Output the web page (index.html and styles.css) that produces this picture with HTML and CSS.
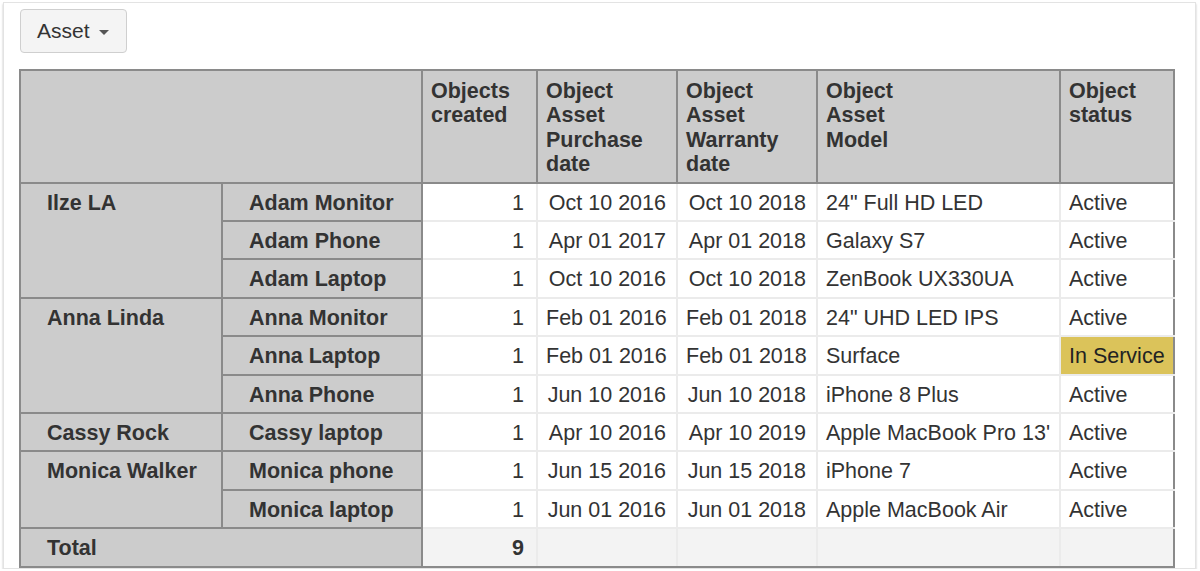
FILE: index.html
```html
<!DOCTYPE html>
<html>
<head>
<meta charset="utf-8">
<title>Asset report</title>
<link rel="stylesheet" href="styles.css">
</head>
<body>
<div class="panel">
  <button class="dropdown">Asset <span class="caret"></span></button>
  <table class="pivot">
    <colgroup>
      <col class="c-owner"><col class="c-item"><col class="c-count"><col class="c-date"><col class="c-date"><col class="c-model"><col class="c-status">
    </colgroup>
    <thead>
      <tr>
        <th colspan="2"></th>
        <th>Objects created</th>
        <th>Object Asset Purchase date</th>
        <th>Object Asset Warranty date</th>
        <th><span class="wrap">Object Asset Model</span></th>
        <th class="last">Object status</th>
      </tr>
    </thead>
    <tbody>
      <tr>
        <th class="rh" rowspan="3">Ilze LA</th>
        <th class="rh">Adam Monitor</th>
        <td class="num">1</td><td class="num">Oct 10 2016</td><td class="num">Oct 10 2018</td><td>24" Full HD LED</td><td class="last">Active</td>
      </tr>
      <tr>
        <th class="rh">Adam Phone</th>
        <td class="num">1</td><td class="num">Apr 01 2017</td><td class="num">Apr 01 2018</td><td>Galaxy S7</td><td class="last">Active</td>
      </tr>
      <tr>
        <th class="rh">Adam Laptop</th>
        <td class="num">1</td><td class="num">Oct 10 2016</td><td class="num">Oct 10 2018</td><td>ZenBook UX330UA</td><td class="last">Active</td>
      </tr>
      <tr>
        <th class="rh" rowspan="3">Anna Linda</th>
        <th class="rh">Anna Monitor</th>
        <td class="num">1</td><td class="num">Feb 01 2016</td><td class="num">Feb 01 2018</td><td>24" UHD LED IPS</td><td class="last">Active</td>
      </tr>
      <tr>
        <th class="rh">Anna Laptop</th>
        <td class="num">1</td><td class="num">Feb 01 2016</td><td class="num">Feb 01 2018</td><td>Surface</td><td class="last service">In Service</td>
      </tr>
      <tr>
        <th class="rh">Anna Phone</th>
        <td class="num">1</td><td class="num">Jun 10 2016</td><td class="num">Jun 10 2018</td><td>iPhone 8 Plus</td><td class="last">Active</td>
      </tr>
      <tr>
        <th class="rh">Cassy Rock</th>
        <th class="rh">Cassy laptop</th>
        <td class="num">1</td><td class="num">Apr 10 2016</td><td class="num">Apr 10 2019</td><td>Apple MacBook Pro 13'</td><td class="last">Active</td>
      </tr>
      <tr>
        <th class="rh" rowspan="2">Monica Walker</th>
        <th class="rh">Monica phone</th>
        <td class="num">1</td><td class="num">Jun 15 2016</td><td class="num">Jun 15 2018</td><td>iPhone 7</td><td class="last">Active</td>
      </tr>
      <tr>
        <th class="rh">Monica laptop</th>
        <td class="num">1</td><td class="num">Jun 01 2016</td><td class="num">Jun 01 2018</td><td>Apple MacBook Air</td><td class="last">Active</td>
      </tr>
      <tr class="total">
        <th class="rh" colspan="2">Total</th>
        <td class="num strong">9</td><td></td><td></td><td></td><td class="last"></td>
      </tr>
    </tbody>
  </table>
</div>
</body>
</html>
```

FILE: styles.css
```css
html, body {
  margin: 0;
  padding: 0;
  background: #ffffff;
}

body {
  font-family: "Liberation Sans", Arial, Helvetica, sans-serif;
  color: #333333;
  overflow: hidden;
}

.panel {
  margin: 2px 4px 0 3px;
  border: 1px solid #e3e3e3;
  padding: 6px 21px 0 16px;
  box-shadow: 0 2px 2px rgba(0, 0, 0, 0.25);
  background: #ffffff;
}

.dropdown {
  display: flex;
  align-items: center;
  gap: 9px;
  height: 44px;
  width: 107px;
  padding: 0 0 0 16px;
  border: 1px solid #cfcfcf;
  border-radius: 4px;
  background: #f4f4f4;
  font-family: inherit;
  font-size: 21px;
  color: #333333;
  margin: 0 0 16px 0;
}

.caret {
  width: 0;
  height: 0;
  border-left: 5px solid transparent;
  border-right: 5px solid transparent;
  border-top: 5px solid #555555;
  margin-top: 2px;
}

.pivot {
  width: 100%;
  margin-left: -1px;
  table-layout: fixed;
  border-collapse: collapse;
  border: 2px solid #8a8a8a;
  font-size: 21.5px;
  line-height: 24.4px;
}

.c-owner { width: 202px; }
.c-item { width: 200px; }
.c-count { width: 115px; }
.c-date { width: 140px; }
.c-model { width: 243px; }
.c-status { width: 114px; }

.pivot thead th {
  background: #cccccc;
  border: 2px solid #8a8a8a;
  text-align: left;
  vertical-align: top;
  font-weight: bold;
  padding: 8px 8px 5px 8px;
}

.wrap {
  display: block;
  max-width: 100px;
}

.pivot th.rh {
  background: #cccccc;
  border: 2px solid #8a8a8a;
  text-align: left;
  vertical-align: top;
  font-weight: bold;
  padding: 7px 8px 5px 26px;
  white-space: nowrap;
}

.pivot td {
  border: 2px solid #ebebeb;
  padding: 7px 9px 5px 8px;
  white-space: nowrap;
  overflow: hidden;
}

.pivot td.num {
  text-align: right;
  padding-right: 10px;
}

.pivot td:first-of-type.num {
  padding-right: 12px;
}

.pivot .last {
  border-right: 2px solid #8a8a8a;
}

.pivot td.service {
  background: #dbc35a;
  color: #222222;
}

.pivot tr.total td {
  background: #f3f3f3;
  border-bottom: 2px solid #8a8a8a;
}

.pivot td.strong {
  font-weight: bold;
}
```
